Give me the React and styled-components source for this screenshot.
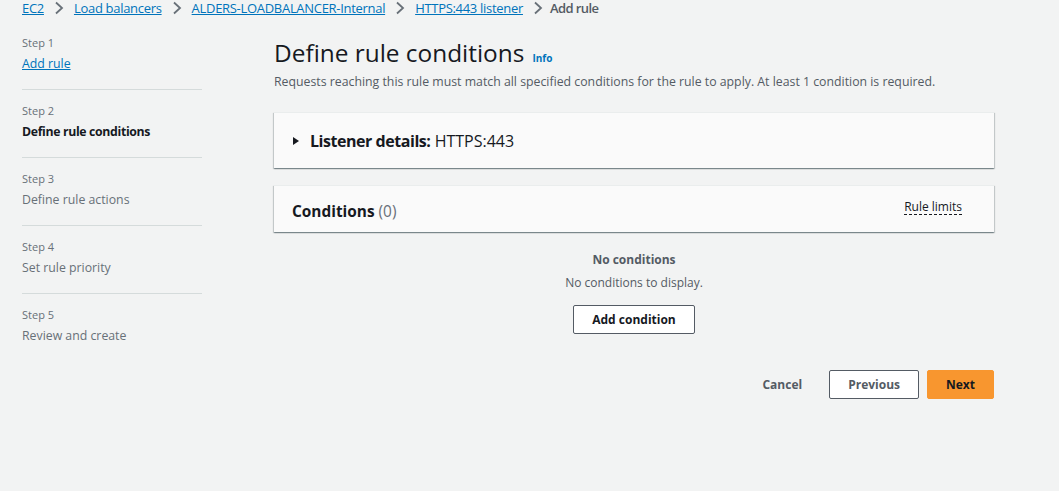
import React from 'react';
import styled, { createGlobalStyle } from 'styled-components';

const GlobalStyle = createGlobalStyle`
  html, body {
    margin: 0;
    padding: 0;
    background: #f2f3f3;
  }
  body {
    font-family: 'Open Sans', 'Liberation Sans', sans-serif;
    color: #16191f;
  }
`;

const Page = styled.div`
  width: 1059px;
  height: 491px;
  background: #f2f3f3;
  overflow: hidden;
`;

const Breadcrumbs = styled.nav`
  display: flex;
  align-items: center;
  gap: 10px;
  padding: 0 22px;
  height: 16px;
  font-size: 13px;
`;

const Crumb = styled.a`
  color: #0073bb;
  text-decoration: underline;
  letter-spacing: -0.3px;
`;

const CurrentCrumb = styled.span`
  color: #545b64;
  font-weight: 600;
  letter-spacing: -0.6px;
  margin-left: -3px;
`;

const Chevron = () => (
  <svg width="10" height="14" viewBox="0 0 10 14">
    <path d="M2 1.5 L8 7 L2 12.5" fill="none" stroke="#687078" strokeWidth="1.8" />
  </svg>
);

const Layout = styled.div`
  display: grid;
  grid-template-columns: 180px 720px;
  column-gap: 72px;
  padding: 0 22px;
  margin-top: 20px;
`;

const StepList = styled.ol`
  list-style: none;
  margin: 0;
  padding: 0;
`;

const StepItem = styled.li`
  padding: ${({ first }) => (first ? '0' : '14px')} 0 16px;
  border-bottom: ${({ last }) => (last ? 'none' : '1px solid #d5dbdb')};
`;

const StepNumber = styled.div`
  font-size: 11px;
  color: #687078;
  line-height: 14px;
`;

const StepLabel = styled.div`
  margin-top: 5px;
  font-size: 12.3px;
  line-height: 18px;
  color: ${({ active }) => (active ? '#16191f' : '#687078')};
  font-weight: ${({ active }) => (active ? 700 : 400)};
  letter-spacing: ${({ active }) => (active ? '-0.35px' : '0')};
`;

const StepLink = styled.a`
  color: #0073bb;
  text-decoration: underline;
`;

const Main = styled.div`
  display: flex;
  flex-direction: column;
`;

const TitleRow = styled.div`
  display: flex;
  align-items: baseline;
  gap: 8px;
  margin-top: 3px;
`;

const Title = styled.h1`
  margin: 0;
  font-size: 24.4px;
  font-weight: 400;
  line-height: 28px;
  color: #16191f;
`;

const InfoLink = styled.a`
  font-size: 10px;
  font-weight: 700;
  color: #0073bb;
`;

const Description = styled.p`
  margin: 7px 0 0;
  font-size: 12.3px;
  color: #545b64;
  line-height: 16px;
`;

const Panel = styled.section`
  background: #fafafa;
  margin-top: ${({ gap }) => gap}px;
  border-top: 1px solid #eaeded;
  box-shadow: 0 1px 1px 0 rgba(0, 28, 36, 0.3), 1px 1px 1px 0 rgba(0, 28, 36, 0.15),
    -1px 1px 1px 0 rgba(0, 28, 36, 0.15);
`;

const PanelHeader = styled.div`
  display: flex;
  align-items: center;
  justify-content: space-between;
  height: ${({ h }) => h}px;
  padding: 0 32px 0 18px;
`;

const Expander = styled.div`
  display: flex;
  align-items: center;
  gap: 10px;
  font-size: 16px;
  color: #16191f;
`;

const Caret = () => (
  <svg width="8" height="10" viewBox="0 0 8 10">
    <path d="M1 1 L7 5 L1 9 Z" fill="#16191f" />
  </svg>
);

const Bold = styled.span`
  font-weight: 700;
  letter-spacing: -0.45px;
`;

const Count = styled.span`
  color: #687078;
  font-weight: 400;
`;

const HeaderTitle = styled.h2`
  margin: 4px 0 0;
  font-size: 15.4px;
  font-weight: 700;
  color: #16191f;
`;

const LimitsLink = styled.span`
  font-size: 12px;
  color: #16191f;
  border-bottom: 1px dashed #16191f;
  line-height: 15px;
  margin-top: -4px;
`;

const Empty = styled.div`
  display: flex;
  flex-direction: column;
  align-items: center;
  padding-top: 20px;
`;

const EmptyTitle = styled.div`
  font-size: 12px;
  font-weight: 700;
  color: #545b64;
  line-height: 16px;
`;

const EmptyText = styled.div`
  margin-top: 7px;
  font-size: 12px;
  color: #545b64;
  line-height: 16px;
`;

const Button = styled.button`
  font-family: inherit;
  font-size: 12px;
  font-weight: 700;
  height: 29px;
  padding: 0 ${({ px }) => px}px;
  border-radius: 2px;
  cursor: pointer;
  color: ${({ variant }) => (variant === 'primary' ? '#16191f' : '#545b64')};
  background: ${({ variant }) =>
    variant === 'primary' ? '#f8962f' : variant === 'link' ? 'transparent' : '#ffffff'};
  border: 1px solid
    ${({ variant }) =>
      variant === 'primary' ? '#f8962f' : variant === 'link' ? 'transparent' : '#545b64'};
`;

const AddButton = styled(Button)`
  margin-top: 14px;
  color: #16191f;
`;

const Actions = styled.div`
  display: flex;
  justify-content: flex-end;
  align-items: center;
  gap: 8px;
  margin-top: 36px;
`;

const steps = [
  { n: 1, label: 'Add rule', link: true },
  { n: 2, label: 'Define rule conditions', active: true },
  { n: 3, label: 'Define rule actions' },
  { n: 4, label: 'Set rule priority' },
  { n: 5, label: 'Review and create' },
];

export default function App() {
  return (
    <Page>
      <GlobalStyle />
      <Breadcrumbs>
        <Crumb>EC2</Crumb>
        <Chevron />
        <Crumb>Load balancers</Crumb>
        <Chevron />
        <Crumb>ALDERS-LOADBALANCER-Internal</Crumb>
        <Chevron />
        <Crumb>HTTPS:443 listener</Crumb>
        <Chevron />
        <CurrentCrumb>Add rule</CurrentCrumb>
      </Breadcrumbs>
      <Layout>
        <StepList>
          {steps.map((s, i) => (
            <StepItem key={s.n} first={i === 0} last={i === steps.length - 1}>
              <StepNumber>Step {s.n}</StepNumber>
              <StepLabel active={s.active}>
                {s.link ? <StepLink>{s.label}</StepLink> : s.label}
              </StepLabel>
            </StepItem>
          ))}
        </StepList>
        <Main>
          <TitleRow>
            <Title>Define rule conditions</Title>
            <InfoLink>Info</InfoLink>
          </TitleRow>
          <Description>
            Requests reaching this rule must match all specified conditions for the rule to apply. At least 1
            condition is required.
          </Description>
          <Panel gap={22}>
            <PanelHeader h={55}>
              <Expander>
                <Caret />
                <span>
                  <Bold>Listener details:</Bold> HTTPS:443
                </span>
              </Expander>
            </PanelHeader>
          </Panel>
          <Panel gap={17}>
            <PanelHeader h={46}>
              <HeaderTitle>
                Conditions <Count>(0)</Count>
              </HeaderTitle>
              <LimitsLink>Rule limits</LimitsLink>
            </PanelHeader>
          </Panel>
          <Empty>
            <EmptyTitle>No conditions</EmptyTitle>
            <EmptyText>No conditions to display.</EmptyText>
            <AddButton px={18}>Add condition</AddButton>
          </Empty>
          <Actions>
            <Button variant="link" px={18}>Cancel</Button>
            <Button px={18}>Previous</Button>
            <Button variant="primary" px={18}>Next</Button>
          </Actions>
        </Main>
      </Layout>
    </Page>
  );
}
